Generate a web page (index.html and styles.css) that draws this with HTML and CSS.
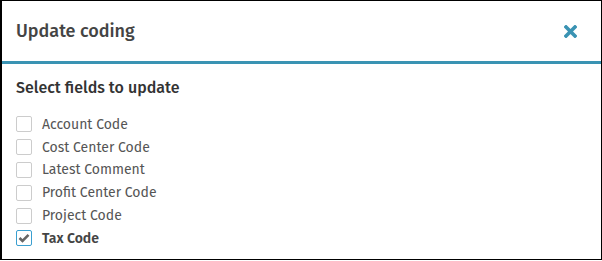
FILE: index.html
```html
<!DOCTYPE html>
<html>

<head>
  <meta charset="UTF-8">
  <title>Update coding</title>
  <link rel="stylesheet" href="styles.css">
</head>

<body>

  <div class="modal">
    <div class="modal-header">
      <span class="modal-title">Update coding</span>
      <button class="close-btn" aria-label="Close">
        <svg width="13" height="13" viewBox="0 0 13 13">
          <path d="M2 2 L11 11 M11 2 L2 11" stroke="#3a93b3" stroke-width="3.6" stroke-linecap="square" />
        </svg>
      </button>
    </div>

    <div class="modal-body">
      <div class="section-title">Select fields to update</div>
      <ul class="field-list">
        <li class="field"><span class="box"></span>Account Code</li>
        <li class="field"><span class="box"></span>Cost Center Code</li>
        <li class="field"><span class="box"></span>Latest Comment</li>
        <li class="field"><span class="box"></span>Profit Center Code</li>
        <li class="field"><span class="box"></span>Project Code</li>
        <li class="field checked">
          <span class="box">
            <svg width="12" height="12" viewBox="0 0 12 12">
              <path d="M1.5 6 L4.5 9 L10.5 2.8" fill="none" stroke="#666" stroke-width="2.6" />
            </svg>
          </span>Tax Code
        </li>
      </ul>
    </div>
  </div>

</body>

</html>
```

FILE: styles.css
```css
body {
  margin: 0;
  padding: 0;
  background-color: #fff;
  font-family: "Fira Sans", "Open Sans", "Noto Sans", sans-serif;
}

.modal {
  width: 599px;
  height: 258px;
  border: 1px solid #000;
  border-left-width: 2px;
  background-color: #fff;
}

.modal-header {
  display: flex;
  align-items: center;
  justify-content: space-between;
  height: 60px;
  padding: 0 24px 0 14px;
  border-bottom: 3px solid #3a93b3;
}

.modal-title {
  font-size: 18px;
  font-weight: 500;
  color: #444;
}

.close-btn {
  border: none;
  background: none;
  padding: 0;
  width: 13px;
  height: 13px;
  display: flex;
}

.modal-body {
  padding: 14px 14px 0 14px;
}

.section-title {
  font-size: 16px;
  font-weight: 500;
  color: #333;
  margin-bottom: 16px;
}

.field-list {
  list-style: none;
  margin: 0;
  padding: 0;
}

.field {
  display: flex;
  align-items: center;
  height: 22.8px;
  font-size: 14px;
  color: #555;
}

.box {
  box-sizing: border-box;
  width: 16px;
  height: 16px;
  border: 1px solid #ccc;
  border-radius: 2px;
  margin-right: 10px;
  display: flex;
  align-items: center;
  justify-content: center;
}

.field.checked {
  font-weight: 600;
  color: #444;
}

.field.checked .box {
  border-color: #3a9fd0;
}
```
